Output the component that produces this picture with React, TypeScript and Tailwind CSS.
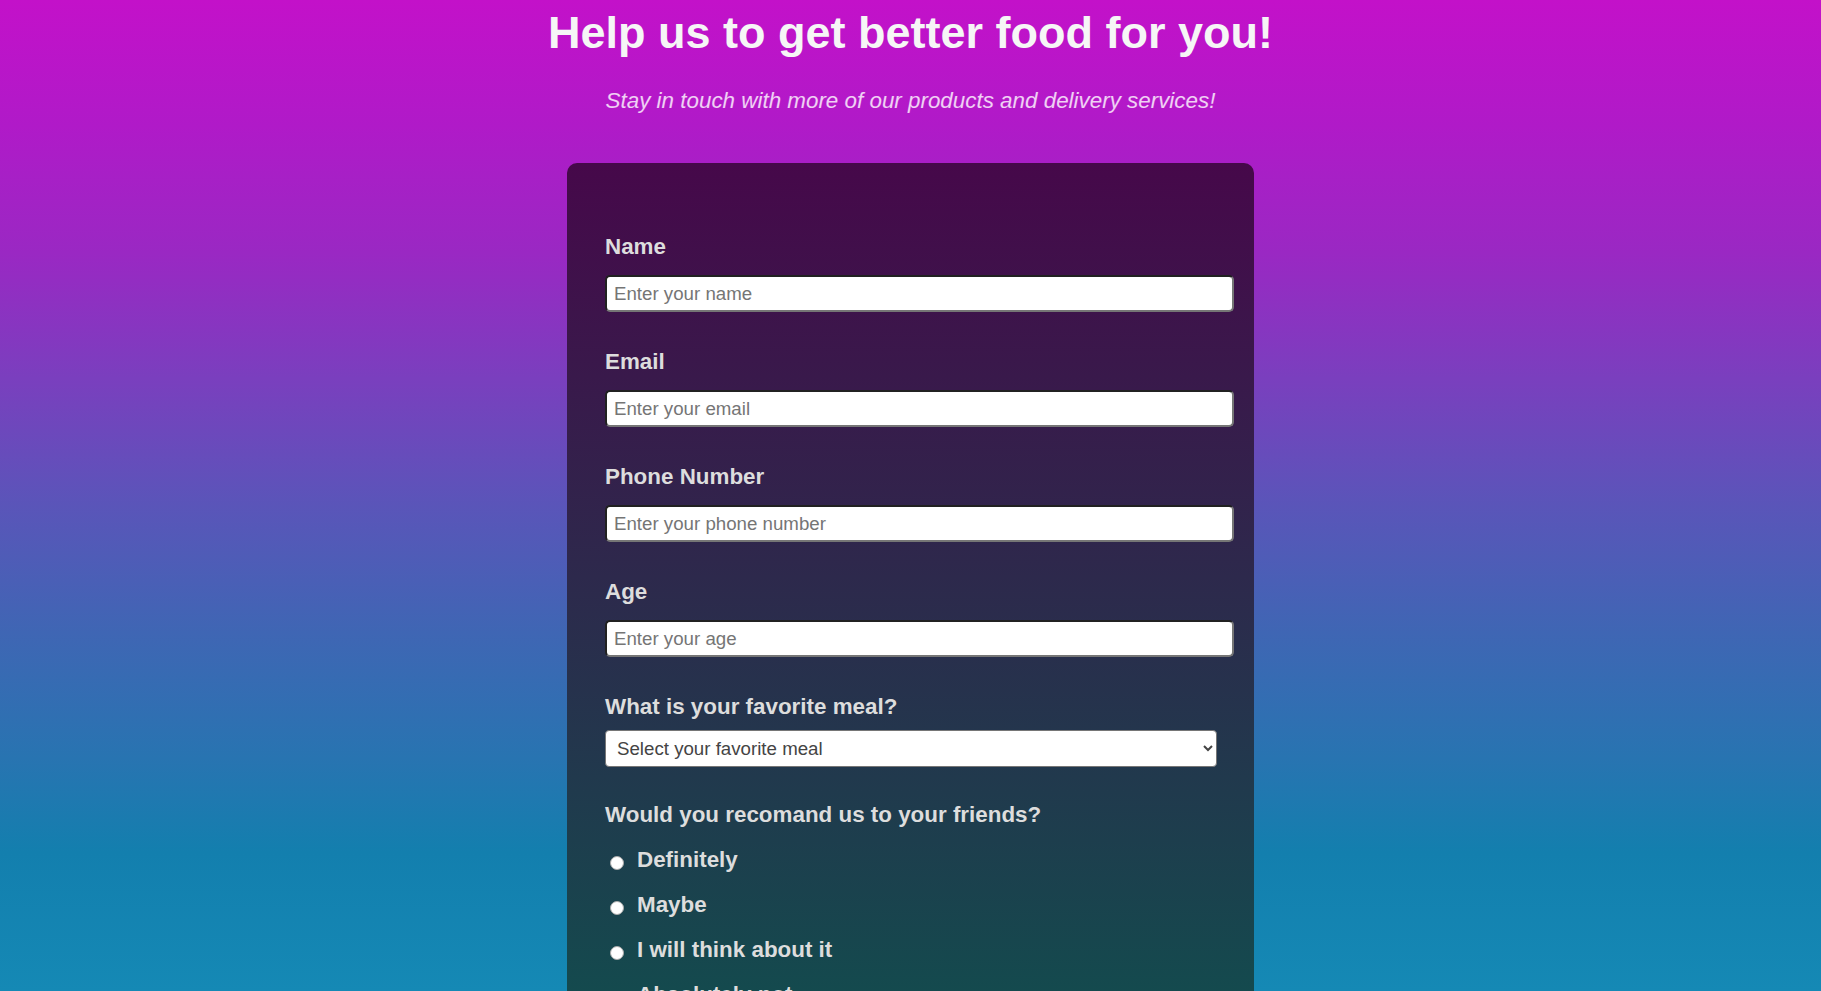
export default function App() {
  const options = ["Definitely", "Maybe", "I will think about it", "Absolutely not"];

  return (
    <main className="min-h-screen bg-fixed bg-[linear-gradient(180deg,#c311c9_0%,#b01ac8_12.7%,#9a28c3_25.5%,#7a3fbe_38.2%,#5a55b9_51%,#3f66b4_63.8%,#2874b1_76.5%,#137fae_86%,#1589b5_100%)] pb-16 font-['Liberation_Sans',Arial,sans-serif]">
      {/* HEADER */}
      <header className="pt-[7px] text-center">
        <h1 className="text-[45px] font-bold leading-[52px] text-[#f6f6f6]">
          Help us to get better food for you!
        </h1>
        <p className="mt-[29px] text-[22.4px] italic leading-[26px] text-white/80">
          Stay in touch with more of our products and delivery services!
        </p>
      </header>

      {/* FORM CARD */}
      <form className="mx-auto mt-[49px] w-[687px] rounded-[10px] bg-fixed bg-[linear-gradient(180deg,#50004a_0%,#46084a_16.4%,#144a4e_100%)] pb-16 pl-[38px] pr-[20px] pt-[71px]">
        <Field label="Name" placeholder="Enter your name" />
        <Field label="Email" placeholder="Enter your email" />
        <Field label="Phone Number" placeholder="Enter your phone number" />
        <Field label="Age" placeholder="Enter your age" />

        <label className="block text-[22.4px] font-bold leading-[26px] text-[#dddddd]">
          What is your favorite meal?
        </label>
        <select className="mt-[10px] h-[37px] w-[612px] rounded-[4px] border border-[#767676] bg-white pl-[7px] pr-2 text-[18.7px] text-[#444444]">
          <option>Select your favorite meal</option>
          <option>Breakfast</option>
          <option>Lunch</option>
          <option>Dinner</option>
        </select>

        <p className="mt-[35px] text-[22.4px] font-bold leading-[26px] text-[#dddddd]">
          Would you recomand us to your friends?
        </p>
        <div className="mt-[19px] flex flex-col gap-[19px]">
          {options.map((o) => (
            <label key={o} className="flex items-center pl-[5px] text-[22.4px] font-bold leading-[26px] text-[#dddddd]">
              <input
                type="radio"
                name="recommend"
                className="mt-[6px] h-[14px] w-[14px] appearance-none rounded-full border border-[#aaaaaa] bg-white"
              />
              <span className="ml-[13px]">{o}</span>
            </label>
          ))}
        </div>
      </form>
    </main>
  );
}

function Field({ label, placeholder }: { label: string; placeholder: string }) {
  return (
    <div className="mb-[37px]">
      <label className="block text-[22.4px] font-bold leading-[26px] text-[#dddddd]">{label}</label>
      <input
        type="text"
        placeholder={placeholder}
        className="mt-[15px] h-[37px] w-[629px] rounded-[5px] border-2 border-[#767676] [border-style:inset] bg-white px-[7px] text-[18.7px] text-[#333333] placeholder:text-[#757575]"
      />
    </div>
  );
}
